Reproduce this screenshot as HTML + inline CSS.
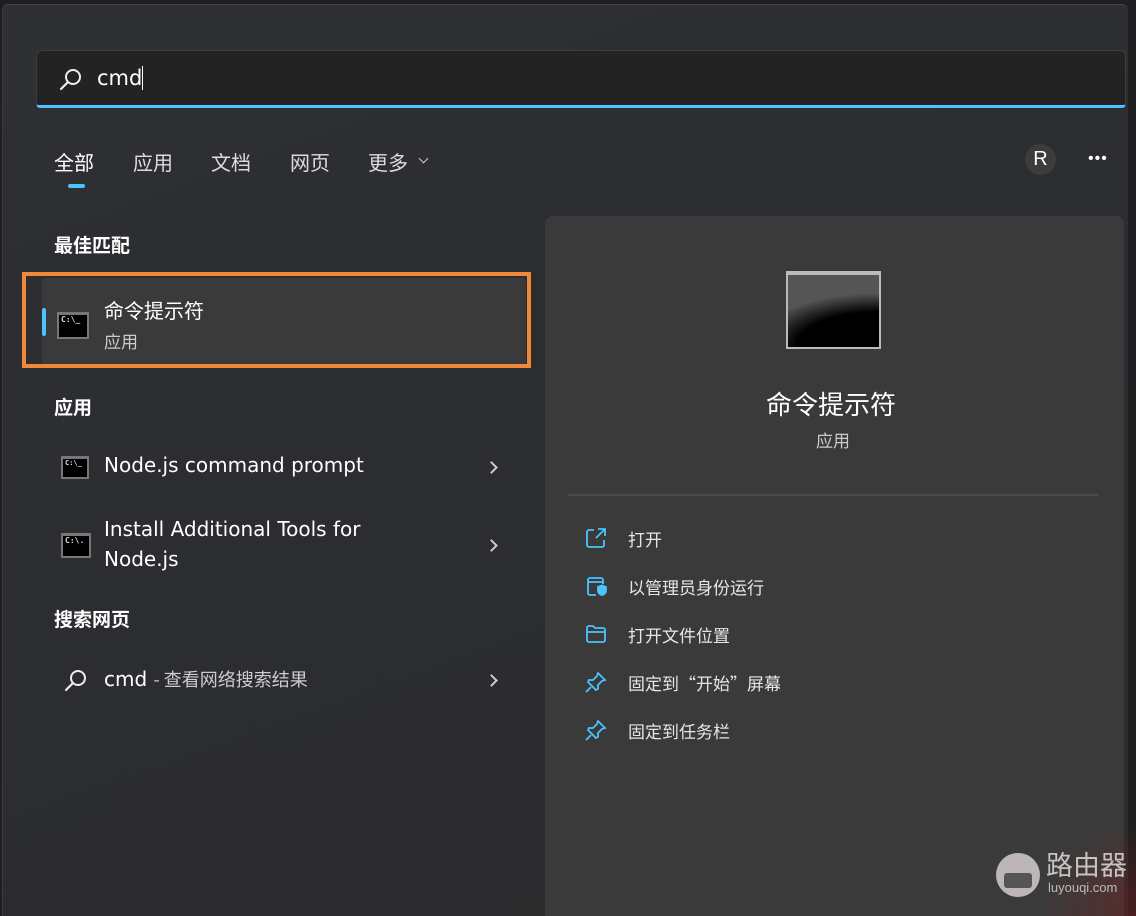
<!DOCTYPE html>
<html><head><meta charset="utf-8"><style>
*{margin:0;padding:0;box-sizing:border-box}
body{width:1136px;height:916px;background:#1f1f21;position:relative;overflow:hidden;font-family:"Liberation Sans","Noto Sans CJK SC",sans-serif;color:#fff}
.a{position:absolute;white-space:nowrap}
.win{position:absolute;left:2px;top:4px;width:1126px;height:912px;background:linear-gradient(160deg,#2f3033 0%,#2b2d31 40%,#2c2c2c 100%);border-top:1px solid #444;border-left:1px solid #3a3a3a;border-radius:6px 6px 0 0}
.cjk{font-family:"Noto Sans CJK SC",sans-serif}
.lat{font-family:"DejaVu Sans","Noto Sans CJK SC",sans-serif}
.chev{position:absolute;width:9px;height:9px;border-right:2px solid #ccc;border-top:2px solid #ccc;transform:rotate(45deg)}
.cmdico{position:absolute;background:#000;border:2px solid #777;border-top-width:3px}
.cmdico span{position:absolute;left:2px;top:0;font:bold 8px "DejaVu Sans Mono",monospace;color:#ddd}
.act{position:absolute;left:628px;font-size:17px;color:#e6e6e6}
</style></head><body>
<div class="win"></div>
<div class="a" style="left:36px;top:50px;width:1090px;height:58px;background:#232323;border:1px solid #3d3d3d;border-bottom:3px solid #4cc2ff;border-radius:6px 6px 4px 4px"></div>
<svg class="a" style="left:58px;top:67px" width="26" height="26" viewBox="0 0 26 26"><circle cx="15" cy="10" r="7" fill="none" stroke="#eee" stroke-width="2"/><path d="M10 15L3 22" stroke="#eee" stroke-width="2.2" stroke-linecap="round"/></svg>
<div class="a lat" style="left:97px;top:66px;font-size:21px;color:#fff">cmd<span style="display:inline-block;width:1px;height:24px;background:#fff;vertical-align:-5px"></span></div>
<div class="a cjk" style="left:54px;top:147px;font-size:20px;color:#fff">全部</div>
<div class="a" style="left:68px;top:184px;width:17px;height:4px;border-radius:2px;background:#4cc2ff"></div>
<div class="a cjk" style="left:133px;top:147px;font-size:20px;color:#ddd">应用</div>
<div class="a cjk" style="left:211px;top:147px;font-size:20px;color:#ddd">文档</div>
<div class="a cjk" style="left:290px;top:147px;font-size:20px;color:#ddd">网页</div>
<div class="a cjk" style="left:368px;top:147px;font-size:20px;color:#ddd">更多</div>
<div class="a" style="left:420px;top:155px;width:7px;height:7px;border-right:1.5px solid #ccc;border-bottom:1.5px solid #ccc;transform:rotate(45deg)"></div>
<div class="a" style="left:1025px;top:144px;width:31px;height:31px;border-radius:50%;background:#3c3c3c;color:#fff;font-size:20px;text-align:center;line-height:31px">R</div>
<div class="a" style="left:1088px;top:150px;font-size:16px;color:#fff;letter-spacing:1px">•••</div>
<div class="a cjk" style="left:54px;top:231px;font-size:19px;font-weight:bold;color:#fff">最佳匹配</div>
<div class="a" style="left:42px;top:278px;width:484px;height:86px;background:#3a3a3a;border-radius:4px"></div>
<div class="a" style="left:22px;top:272px;width:509px;height:96px;border:4px solid #f0883a"></div>
<div class="a" style="left:42px;top:308px;width:4px;height:28px;background:#4cc2ff;border-radius:2px"></div>
<div class="cmdico" style="left:57px;top:312px;width:32px;height:27px"><span>C:\_</span></div>
<div class="a cjk" style="left:104px;top:295px;font-size:20px;color:#fff">命令提示符</div>
<div class="a cjk" style="left:104px;top:328px;font-size:17px;color:#ccc">应用</div>
<div class="a cjk" style="left:54px;top:393px;font-size:19px;font-weight:bold;color:#fff">应用</div>
<div class="cmdico" style="left:61px;top:456px;width:28px;height:23px"><span style="font-size:7px">C:\_</span></div>
<div class="a lat" style="left:104px;top:453px;font-size:20px;color:#fff">Node.js command prompt</div>
<div class="chev" style="left:487px;top:463px"></div>
<div class="cmdico" style="left:61px;top:533px;width:30px;height:25px"><span>C:\.</span></div>
<div class="a lat" style="left:104px;top:514px;font-size:20px;color:#fff;line-height:30px">Install Additional Tools for<br>Node.js</div>
<div class="chev" style="left:487px;top:541px"></div>
<div class="a cjk" style="left:54px;top:605px;font-size:19px;font-weight:bold;color:#fff">搜索网页</div>
<svg class="a" style="left:63px;top:668px" width="26" height="26" viewBox="0 0 26 26"><circle cx="15" cy="10" r="7" fill="none" stroke="#eee" stroke-width="2"/><path d="M10 15L3 22" stroke="#eee" stroke-width="2.2" stroke-linecap="round"/></svg>
<div class="a lat" style="left:104px;top:666px;font-size:20px;color:#fff">cmd <span class="cjk" style="font-size:18px;color:#ccc">- 查看网络搜索结果</span></div>
<div class="chev" style="left:487px;top:676px"></div>
<div class="a" style="left:545px;top:216px;width:579px;height:700px;background:#3a3a3a;border-radius:8px 8px 0 0"></div>
<div class="a" style="left:786px;top:271px;width:95px;height:78px;background:radial-gradient(ellipse 140% 75% at 100% 100%,#000 65%,#555 100%);border:2px solid #bbb;border-top-width:4px"></div>
<div class="a cjk" style="left:766px;top:385px;font-size:26px;color:#fff">命令提示符</div>
<div class="a cjk" style="left:816px;top:427px;font-size:17px;color:#ccc">应用</div>
<div class="a" style="left:568px;top:494px;width:531px;height:2px;background:#4a4a4a"></div>
<svg class="a" style="left:584px;top:526px" width="24" height="24" viewBox="0 0 24 24" fill="none" stroke="#4cc2ff" stroke-width="1.8"><path d="M10 4H5a2 2 0 0 0-2 2v13a2 2 0 0 0 2 2h13a2 2 0 0 0 2-2v-5"/><path d="M14 3h7v7M21 3l-9 9"/></svg>
<div class="act cjk" style="top:526px">打开</div>
<svg class="a" style="left:584px;top:574px" width="24" height="24" viewBox="0 0 24 24" fill="none" stroke="#4cc2ff" stroke-width="1.8"><path d="M12 21H6a2 2 0 0 1-2-2V6a2 2 0 0 1 2-2h11a2 2 0 0 1 2 2v4M4 8h15"/><path d="M14 13l4-1.5 4 1.5v4c0 2-2 3.5-4 4-2-.5-4-2-4-4z" fill="#4cc2ff"/></svg>
<div class="act cjk" style="top:574px">以管理员身份运行</div>
<svg class="a" style="left:584px;top:622px" width="24" height="24" viewBox="0 0 24 24" fill="none" stroke="#4cc2ff" stroke-width="1.8"><path d="M3 6a2 2 0 0 1 2-2h4l2 2h8a2 2 0 0 1 2 2v10a2 2 0 0 1-2 2H5a2 2 0 0 1-2-2z M3 10h18"/></svg>
<div class="act cjk" style="top:622px">打开文件位置</div>
<svg class="a" style="left:584px;top:670px" width="24" height="24" viewBox="0 0 24 24" fill="none" stroke="#4cc2ff" stroke-width="1.8"><path d="M14 3l7 7-3 1-4 4 0 4-2 1-8-8 1-2h4l4-4z M7 17l-5 5"/></svg>
<div class="act cjk" style="top:670px">固定到“开始”屏幕</div>
<svg class="a" style="left:584px;top:718px" width="24" height="24" viewBox="0 0 24 24" fill="none" stroke="#4cc2ff" stroke-width="1.8"><path d="M14 3l7 7-3 1-4 4 0 4-2 1-8-8 1-2h4l4-4z M7 17l-5 5"/></svg>
<div class="act cjk" style="top:718px">固定到任务栏</div>
<div class="a" style="left:1040px;top:820px;width:96px;height:96px;background:radial-gradient(circle at 100% 100%,rgba(120,30,30,.5),rgba(0,0,0,0) 70%)"></div>
<div class="a" style="left:996px;top:853px;width:44px;height:44px;border-radius:50%;background:#bdb6b6"></div>
<div class="a" style="left:1004px;top:873px;width:28px;height:15px;border-radius:3px;background:#555"></div>
<div class="a cjk" style="left:1046px;top:848px;font-size:27px;color:#c8c2c2;line-height:32px">路由器</div>
<div class="a" style="left:1048px;top:880px;font-size:13px;color:#c0baba">luyouqi.com</div>
</body></html>
